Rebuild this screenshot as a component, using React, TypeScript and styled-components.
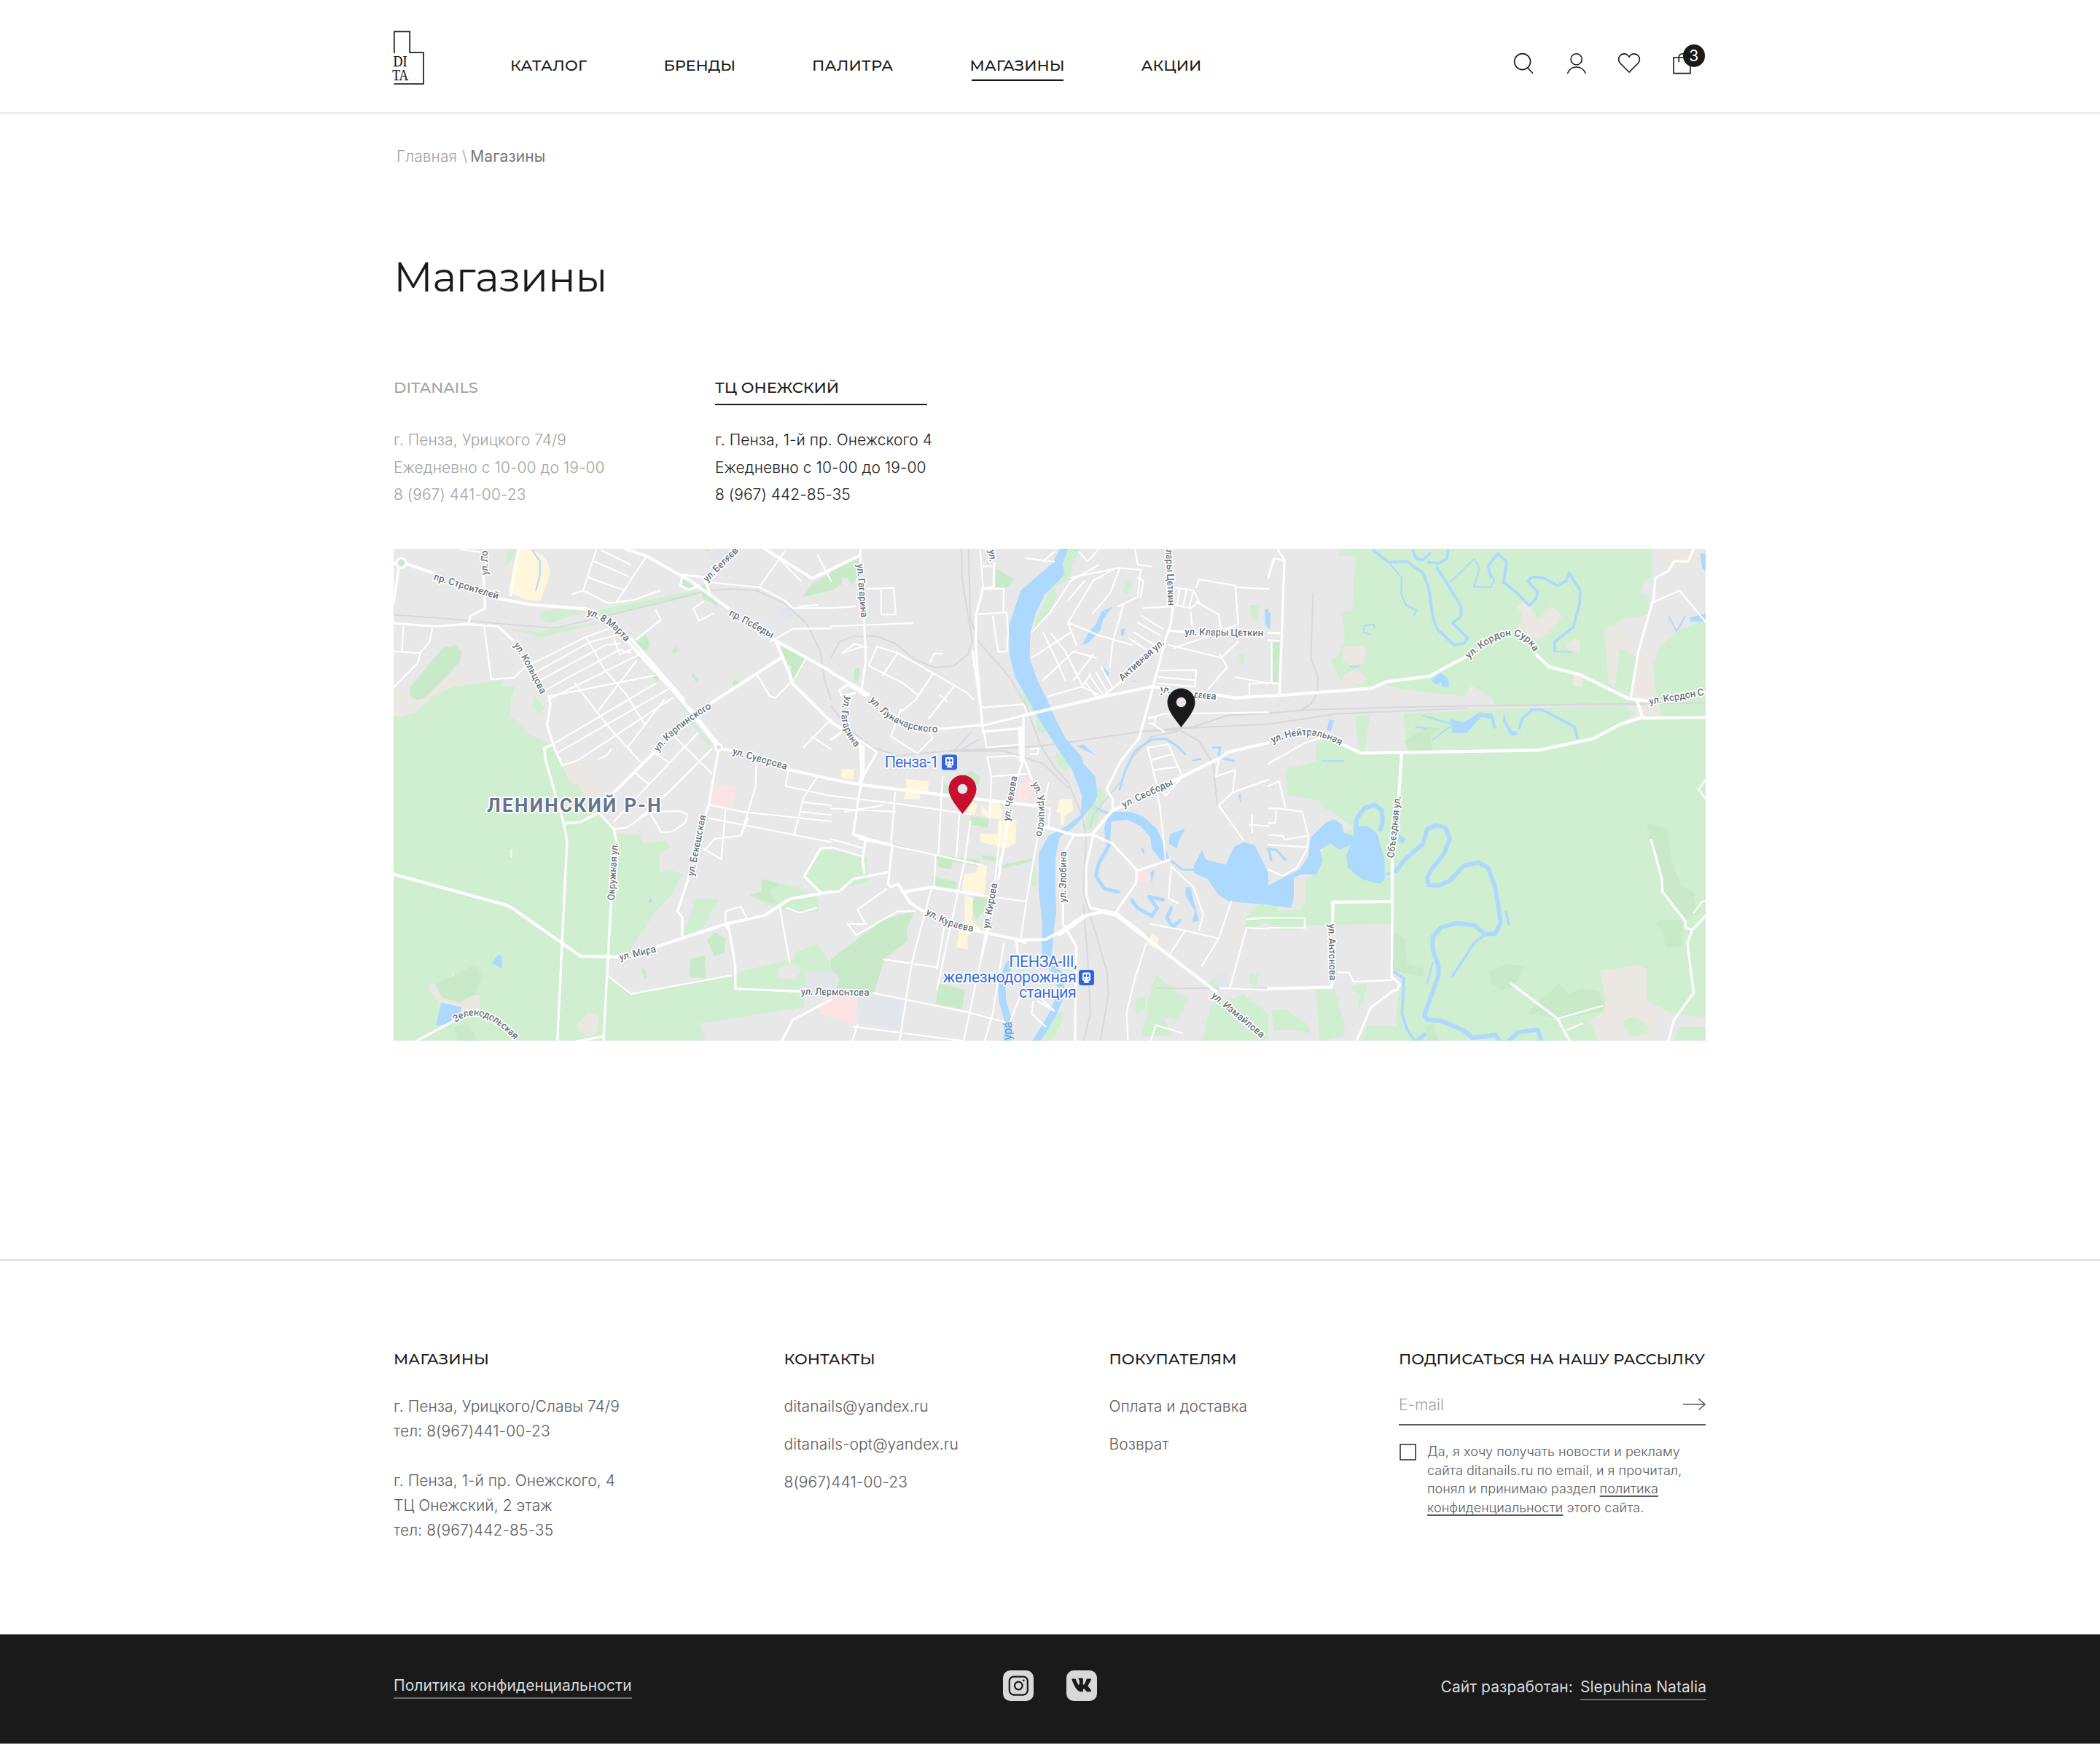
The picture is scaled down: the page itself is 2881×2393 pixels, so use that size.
import React, { useLayoutEffect, useRef, useState } from 'react';
import styled, { createGlobalStyle } from 'styled-components';

const ink = '#1a1a1a';
const muted = '#5c5c5c';
const faint = '#a3a3a3';
const pale = '#d9d9d9';
const display = `Montserrat, Inter, "Open Sans", sans-serif`;
const body = `Inter, "Open Sans", sans-serif`;

const Global = createGlobalStyle`
  *, *::before, *::after { box-sizing: border-box; }
  body { margin: 0; background: #fff; color: ${ink}; font-family: ${body}; font-weight: 300; font-size: 21px; letter-spacing: 0.06px; }
  a { color: inherit; text-decoration: none; }
  p, h1, h2, ul { margin: 0; padding: 0; font-weight: inherit; }
  ul { list-style: none; }
`;

/* ---------- text set to an exact measure ---------- */

const Measured = styled.span`
  display: inline-block;
  white-space: nowrap;
  letter-spacing: 0;
`;

function Fit({ w, children }: { w: number; children: string }) {
  const ref = useRef<HTMLSpanElement>(null);
  const [spacing, setSpacing] = useState(0);
  useLayoutEffect(() => {
    if (!ref.current) return;
    const natural = ref.current.getBoundingClientRect().width;
    setSpacing((w - natural) / children.length);
  }, [w, children]);
  return (
    <Measured ref={ref} style={{ letterSpacing: `${spacing}px` }}>
      {children}
    </Measured>
  );
}

/* ---------- page ---------- */

const Page = styled.div`
  width: 2881px;
  height: 2393px;
  display: flex;
  flex-direction: column;
  overflow: hidden;
`;

const Container = styled.div`
  width: 1800px;
  margin: 0 auto 0 540px;
`;

const Header = styled.header`
  flex: none;
  height: 156px;
  border-bottom: 2px solid #e8e8e8;
`;

const HeaderRow = styled(Container)`
  display: flex;
  align-items: flex-start;
`;

const LogoSvg = styled.svg`
  flex: none;
  width: 46px;
  height: 80px;
  margin: 40px 0 0 -2px;
`;

const Nav = styled.nav`
  display: flex;
  gap: 105px;
  margin: 78px 0 0 116px;
  font-family: ${display};
  font-weight: 500;
  font-size: 21px;
  line-height: 24px;
`;

const NavLink = styled.a<{ $active?: boolean }>`
  height: 33px;
  border-bottom: 2px solid transparent;
  ${(p) =>
    p.$active &&
    `background: linear-gradient(${ink}, ${ink}) 2px 31px / 126px 2px no-repeat border-box;`}
`;

const Tools = styled.div`
  display: flex;
  gap: 42.5px;
  margin: 72px 17.5px 0 auto;
`;

const Tool = styled.button`
  position: relative;
  width: 30px;
  height: 30px;
  padding: 0;
  border: 0;
  background: none;
  svg {
    display: block;
    overflow: visible;
  }
`;

const Badge = styled.span`
  position: absolute;
  left: 16px;
  top: -11px;
  width: 30.5px;
  height: 30.5px;
  border-radius: 50%;
  background: ${ink};
  color: #fff;
  font: 400 21px/31px ${body};
  text-align: center;
`;

const Crumbs = styled.div`
  margin: 46px 0 0 4px;
  height: 26px;
  display: flex;
  gap: 7px;
  line-height: 26px;
  color: ${faint};
`;

const Current = styled.span`
  color: #777;
  font-weight: 400;
  margin-left: -3px;
`;

const Title = styled.h1`
  margin-top: 112px;
  font: 400 56px/80px ${display};
`;

const Stores = styled.div`
  display: flex;
  gap: 148px;
  margin-top: 99px;
  height: 234px;
`;

const Store = styled.section<{ $active?: boolean }>`
  width: ${(p) => (p.$active ? 300 : 293)}px;
  color: ${(p) => (p.$active ? ink : faint)};
  line-height: 37.5px;
  white-space: nowrap;
`;

const StoreName = styled.h2<{ $active?: boolean }>`
  height: 37px;
  width: 291px;
  margin-bottom: 29px;
  font: 500 21px/26px ${display};
  border-bottom: 2px solid ${(p) => (p.$active ? ink : 'transparent')};
`;

const MapFrame = styled.div`
  height: 675px;
  background: #e8e8e8;
  overflow: hidden;
  svg {
    display: block;
  }
`;

const Footer = styled.footer`
  flex: none;
  margin-top: auto;
`;

const FooterTop = styled.div`
  height: 514px;
  border-top: 2px solid #dcdcdc;
`;

const FooterCols = styled(Container)`
  display: grid;
  grid-template-columns: 535.5px 446px 397.5px 421px;
  padding-top: 122px;
  color: ${muted};
`;

const FooterHead = styled.h2`
  font: 500 21px/26px ${display};
  color: ${ink};
  margin-bottom: 35px;
  white-space: nowrap;
`;

const Address = styled.p`
  line-height: 34.2px;
  margin: 0 0 33.6px;
`;

const Links = styled.ul`
  line-height: 34px;
  li + li {
    margin-top: 18.2px;
  }
`;

const MailRow = styled.div`
  display: flex;
  justify-content: space-between;
  align-items: center;
  height: 47px;
  margin-top: -4px;
  padding-bottom: 9px;
  border-bottom: 2px solid ${muted};
  color: ${faint};
`;

const Consent = styled.label`
  display: flex;
  gap: 15px;
  margin-top: 23px;
  font-size: 18px;
  line-height: 25.6px;
`;

const Box = styled.span`
  flex: none;
  width: 23px;
  height: 23px;
  margin: 2px 0 0 1px;
  border: 2px solid ${muted};
`;

const Inline = styled.a`
  text-decoration: underline;
  text-decoration-thickness: 1.5px;
  text-underline-offset: 3px;
  text-decoration-skip-ink: none;
`;

const Bar = styled.div`
  height: 151px;
  background: ${ink};
  border: solid #8c8c8c;
  border-width: 1px 0;
  color: ${pale};
  font-weight: 400;
`;

const BarRow = styled(Container)`
  display: grid;
  grid-template-columns: 1fr auto 1fr;
  align-items: start;
  padding-top: 49px;
`;

const BarLink = styled.a<{ $top: number }>`
  justify-self: start;
  display: inline-block;
  margin-top: ${(p) => p.$top}px;
  padding-bottom: 2px;
  line-height: 28px;
  border-bottom: 2px solid #6f6f6f;
`;

const Social = styled.div`
  display: flex;
  gap: 45px;
`;

const Credit = styled.div`
  display: flex;
  justify-content: flex-end;
  gap: 10px;
  margin-right: -1px;
  line-height: 28px;
  > span {
    margin-top: 9px;
  }
`;

/* ---------- icons ---------- */

const line = { fill: 'none', stroke: ink, strokeWidth: 1.6 };

const Logo = () => (
  <LogoSvg viewBox="0 0 46 80">
    <path d="M2.8 33V3.3H24.2V32.2H43V75.2H2.5" fill="none" stroke={ink} strokeWidth="1.7" />
    <g fontFamily='"Liberation Serif", serif' fontSize="21.5" fill={ink} stroke={ink} strokeWidth="0.25" letterSpacing="0">
      <text x="1.600" y="51" textLength="19" lengthAdjust="spacingAndGlyphs">DI</text>
      <text x="0.300" y="70" textLength="22" lengthAdjust="spacingAndGlyphs">TA</text>
    </g>
  </LogoSvg>
);

const SearchIcon = () => (
  <svg width="30" height="30" {...line}>
    <circle cx="13.6" cy="12.6" r="11" />
    <path d="M21 21.2L28 28.8" />
  </svg>
);

const UserIcon = () => (
  <svg width="30" height="30" {...line}>
    <circle cx="14.7" cy="9.4" r="7.6" />
    <path d="M2.5 29C4.5 23.6 9.2 20 14.8 20S25.200 23.600 27.300 29" />
  </svg>
);

const HeartIcon = () => (
  <svg width="30" height="30" {...line}>
    <path d="M15 27L2.700 14.700C0 12 0 7.200 2.400 4.500C5.300 1.200 10.600 1 13.400 4L15 6L16.600 4C19.400 1 24.700 1.200 27.600 4.500C30 7.200 30 12 27.300 14.700Z" />
  </svg>
);

const BagIcon = () => (
  <svg width="30" height="30" {...line}>
    <path d="M3 6.800H26V28.600H3Z" />
    <path d="M10.200 13V7C10.200 3.500 12 1.800 15.500 1.800H18" />
  </svg>
);

const Instagram = () => (
  <svg width="42" height="42">
    <rect width="42" height="42" rx="10" fill={pale} />
    <rect x="8.800" y="8.600" width="25" height="25" rx="6" fill="none" stroke={ink} strokeWidth="2.200" />
    <circle cx="21.300" cy="21" r="5.300" fill="none" stroke={ink} strokeWidth="2.200" />
    <circle cx="28.300" cy="13.900" r="1.300" fill={ink} />
  </svg>
);

const Vk = () => (
  <svg width="42" height="42">
    <rect width="42" height="42" rx="10" fill={pale} />
    <path
      transform="translate(7 4.300) scale(1.170 1.450)"
      fill={ink}
      d="M12.785 17.240s.41-.045.620-.270c.193-.207.187-.596.187-.596s-.027-1.820.818-2.088c.833-.264 1.903 1.760 3.037 2.538.858.590 1.510.460 1.510.460l3.033-.042s1.587-.098.834-1.345c-.062-.102-.439-.923-2.257-2.610-1.903-1.766-1.648-1.480.644-4.535 1.396-1.860 1.954-2.996 1.780-3.482-.166-.464-1.193-.341-1.193-.341l-3.415.021s-.253-.035-.441.077c-.184.110-.302.367-.302.367s-.541 1.440-1.262 2.664c-1.521 2.583-2.130 2.720-2.378 2.560-.578-.374-.434-1.502-.434-2.303 0-2.504.380-3.548-.740-3.818-.371-.090-.645-.149-1.595-.158-1.220-.013-2.252.004-2.836.290-.389.190-.689.614-.506.639.226.030.737.138 1.009.507.350.476.338 1.546.338 1.546s.201 2.946-.470 3.312c-.460.251-1.092-.261-2.448-2.604-.695-1.200-1.220-2.527-1.220-2.527s-.101-.248-.281-.381c-.219-.161-.524-.212-.524-.212l-3.245.021s-.487.014-.666.226c-.159.188-.013.578-.013.578s2.541 5.944 5.418 8.940c2.638 2.747 5.633 2.567 5.633 2.567z"
    />
  </svg>
);

const Arrow = () => (
  <svg width="31" height="18" fill="none" stroke={muted} strokeWidth="1.600">
    <path d="M0 9H30M21.500 1.500L30 9L21.500 16.500" />
  </svg>
);

/* ---------- map ---------- */

type Sheet = { x: number; kx: number };
const W: Sheet = { x: 0, kx: 2.6133 };
const M: Sheet = { x: 600, kx: 2.6133 };
const E: Sheet = { x: 1200, kx: 2.5705 };

const project = (s: Sheet, pts: string) =>
  pts.trim().split(/\s+/).map((p) => {
    const [x, y] = p.split(',').map(Number);
    return [s.x + x / s.kx, y / 2.2725 - 13.2];
  });

const trace = (s: Sheet, pts: string) =>
  'M' + project(s, pts).map(([x, y]) => `${x.toFixed(1)} ${y.toFixed(1)}`).join('L');

const Lines = ({ s, w, c = '#fff', d }: { s: Sheet; w: number; c?: string; d: string[] }) => (
  <path
    d={d.map((p) => trace(s, p)).join('')}
    fill="none"
    stroke={c}
    strokeWidth={w}
    strokeLinejoin="round"
    strokeLinecap="round"
  />
);

const Areas = ({ s, c, d }: { s: Sheet; c: string; d: string[] }) => (
  <path d={d.map((p) => trace(s, p) + 'Z').join('')} fill={c} />
);

const green = '#d0eed0';
const grove = '#c8eac8';
const water = '#aed9ff';
const sand = '#ebe8e4';
const cream = '#fef7dc';
const rose = '#fce4e4';
const slate = '#e2e6ea';
const rail = '#d6d8db';
const land = '#e8e8e8';

const streets: [Sheet, string, string][] = [
  [W, 'пр. Строителей', '142,126 375,188'],
  [W, 'ул. Ло', '336,112 336,33'],
  [W, 'ул. 8 Марта', '692,236 768,268 832,322'],
  [W, 'ул. Кольцова', '430,330 478,400 528,485'],
  [W, 'пр. Победы', '1200,236 1358,310'],
  [W, 'ул. Беляев', '1124,135 1240,36'],
  [W, 'ул. Карпинского', '948,664 1030,592 1142,526'],
  [W, 'ул. Суворова', '1213,670 1410,719'],
  [W, 'ул. Бекешская', '1076,1052 1120,860'],
  [W, 'Окружная ул.', '791,1127 804,945'],
  [W, 'ул. Мира', '812,1314 945,1286'],
  [W, 'Зеленодольская', '222,1508 320,1490 438,1566'],
  [W, 'ул. Лермонтова', '1460,1420 1708,1424'],
  [M, 'ул. Гагарина', '93,78 108,247'],
  [M, 'ул. Гагарина', '55,488 40,570 90,652'],
  [M, 'ул. Луначарского', '137,502 245,578 385,602'],
  [M, 'ул.', '565,34 570,74'],
  [M, 'лары Цеткин', '1201,32 1209,210'],
  [M, 'ул. Клары Цеткин', '1268,299 1553,303'],
  [M, 'Активная ул.', '1045,444 1125,380 1198,326'],
  [M, 'ул.', '1180,478 1217,481'],
  [M, 'даева', '1298,494 1383,500'],
  [M, 'ул. Свободы', '1050,838 1230,764'],
  [M, 'ул. Чехова', '640,880 668,738'],
  [M, 'ул. Урицкого', '720,762 746,840 734,926'],
  [M, 'ул. Злобина', '842,1133 844,972'],
  [M, 'ул. Кирова', '567,1215 597,1072'],
  [M, 'ул. Кураева', '338,1168 420,1204 510,1224'],
  [M, 'ул. Измайлова', '1362,1426 1545,1558'],
  [E, 'ул. Кордон Сурка', '707,374 850,302 942,360'],
  [E, 'ул. Кордон С', '1345,516 1540,486'],
  [E, 'ул. Нейтральная', '15,637 140,612 256,645'],
  [E, 'Объездная ул.', '443,995 467,800'],
  [E, 'ул. Антонова', '212,1200 216,1378'],
];

function Street({ id, s, name, at }: { id: string; s: Sheet; name: string; at: string }) {
  const p = project(s, at);
  const [a, m] = p;
  const z = p[p.length - 1];
  let d = `M${a}L${z}`;
  let len = Math.hypot(z[0] - a[0], z[1] - a[1]);
  if (p.length === 3) {
    d = `M${a}Q${2 * m[0] - (a[0] + z[0]) / 2} ${2 * m[1] - (a[1] + z[1]) / 2} ${z}`;
    const legs = Math.hypot(m[0] - a[0], m[1] - a[1]) + Math.hypot(z[0] - m[0], z[1] - m[1]);
    len = legs * 1.01;
  }
  return (
    <>
      <path id={id} d={d} fill="none" stroke="none" />
      <text>
        <textPath href={`#${id}`} textLength={len - 1}>{name}</textPath>
      </text>
    </>
  );
}

const Place = ({ s, at, size, children }: { s: Sheet; at: string; size: number; children: string }) => {
  const [a, z] = project(s, at);
  return (
    <text x={a[0]} y={a[1]} fontSize={size} textLength={z[0] - a[0]}>{children}</text>
  );
};

const Station = ({ x, y }: { x: number; y: number }) => (
  <g transform={`translate(${x} ${y})`}>
    <rect width="21" height="21" rx="3.500" fill="#2f66e0" />
    <rect x="5" y="3.500" width="11" height="11.500" rx="2" fill="#fff" />
    <path d="M6.500 17.800L8 15H13L14.500 17.800Z" fill="#fff" />
    <path d="M6.800 6H9.900V9.500H6.800ZM11.100 6H14.200V9.500H11.100ZM7 11.500H8.800V13H7ZM12.200 11.500H14V13H12.200Z" fill="#2f66e0" />
  </g>
);

const Pin = ({ x, y, color }: { x: number; y: number; color: string }) => (
  <g transform={`translate(${x} ${y})`}>
    <path d="M0 0C-5.500 -8 -19 -22 -19 -34.500A19 19 0 0 1 19 -34.500C19 -22 5.500 -8 0 0Z" fill={color} />
    <circle cx="0" cy="-34.500" r="6.800" fill={land} />
  </g>
);

const CityMap = () => (
  <svg width="1800" height="675" viewBox="0 0 1800 675" letterSpacing="0">
    <rect width="1800" height="675" fill={land} />

    {/* sandy ground */}
    <Areas s={W} c={sand} d={[
      '0,490 60,470 200,440 250,385 265,450 80,545 0,560',
      '605,705 690,700 725,740 722,790 660,850 600,760',
      '460,570 550,585 548,610 490,612',
      '120,1385 220,1330 310,1320 320,1500 150,1520',
      '885,925 980,940 960,1060 890,1000',
    ]} />
    <Areas s={M} c={sand} d={['1460,1150 1490,1150 1480,1250 1430,1262']} />

    {/* parkland */}
    <Areas s={W} c={green} d={[
      '0,550 25,555 80,540 140,490 215,460 388,440 390,457 435,458 420,505 418,552 470,575 495,608 550,603 570,640 605,708 640,768 660,763 690,810 735,850 790,905 800,917 885,925 890,950 975,940 992,962 952,982 954,1040 980,1028 1036,1045 990,1115 935,1165 850,1280 845,1303 770,1303 768,1362 852,1418 1235,1358 1330,1330 1460,1380 1470,1460 1100,1510 1120,1568 0,1568',
      '530,225 600,218 690,225 560,262 528,250',
      '405,278 520,290 600,276 740,262 528,306',
      '730,222 1080,160 1090,175 740,240',
      '500,485 545,525 520,545 500,525',
      '1085,1120 1167,1125 1105,1215 1035,1237',
      '1530,965 1700,990 1700,1070 1530,1100 1472,1052',
      '1320,1060 1460,1090 1523,1120 1523,1160 1450,1168 1340,1140 1275,1110 1320,1100',
      '1235,1350 1430,1310 1450,1285 1520,1262 1560,1315 1700,1320 1700,1360 1480,1350 1470,1458 1240,1400',
      '410,30 437,30 430,60 395,85',
      '850,330 905,298 918,320 915,345 872,350 895,375 880,375',
      '1100,30 1138,30 1125,42',
      '1000,490 1065,545 1060,550 990,480',
      '1075,568 1140,640 1130,645 1065,575',
    ]} />
    <Areas s={M} c={green} d={[
      '0,980 40,985 75,1025 70,1060 30,1095 0,1100',
      '848,30 895,30 862,80 860,120 800,150 810,180 780,230 725,300 735,250 790,150 830,120 825,75',
      '684,478 700,480 775,570 770,605 740,600 735,545 700,520',
      '795,680 830,663 855,712 838,725',
      '905,905 955,770 985,800 950,895 915,910',
      '725,1015 738,1030 735,1080 718,1080',
      '1045,160 1065,128 1085,132 1060,175',
      '1500,205 1535,205 1530,250 1508,252',
      '1525,1110 1600,1110 1600,1180 1490,1220 1485,1180 1530,1140',
      '1165,1360 1280,1435 1245,1500 1190,1490 1225,1550 1110,1550 1130,1500 1135,1440',
      '1360,1455 1480,1420 1568,1480 1568,1568 1330,1568',
      '1350,1385 1395,1350 1405,1380 1380,1400',
      '790,1480 830,1470 830,1500 790,1568 760,1568',
      '1465,355 1485,360 1480,390 1465,385',
      '1500,1350 1530,1355 1525,1390 1500,1385',
      '1090,1435 1130,1425 1125,1470 1095,1480',
    ]} />
    <Areas s={E} c={green} d={[
      '250,30 1350,30 1350,120 1325,130 1315,165 1350,180 1345,235 1245,250 1185,285 1200,450 1270,490 1290,510 800,520 790,495 715,455 690,490 580,480 460,465 410,450 350,465 260,450 220,375 245,365 270,320 262,225 295,225 308,55 250,52',
      '1220,330 1300,370 1280,480 1225,465',
      '1355,405 1380,335 1440,290 1542,245 1542,560 1390,555 1370,500',
      '478,545 800,530 1250,520 1298,540 1240,575 1142,620 1100,622 955,658 490,665',
      '310,552 358,550 340,662 325,665 310,600',
      '325,670 490,668 955,662 1240,583 1320,562 1542,560 1542,1568 470,1568 450,1485 470,1350 435,1340 438,1200 0,1204 0,1160 120,1155 115,1070 155,1050 195,960 300,900 245,862 190,835 180,815 130,808 70,800 62,730 70,715 165,695 170,640 220,615',
      '170,1405 235,1402 250,1460 270,1510 265,1550 180,1568',
      '10,1470 60,1465 140,1515 150,1540 90,1530 20,1530',
      '290,1395 350,1385 330,1455 315,1460 325,1425',
      '350,1515 470,1520 470,1568 325,1568',
    ]} />

    {/* bare ground and groves inside the parkland */}
    <Areas s={W} c={land} d={['435,458 550,490 565,640 490,610 420,550', '1105,1512 1435,1462 1480,1470 1480,1568 1120,1568', '1380,1335 1440,1322 1460,1345 1440,1375 1378,1368']} />
    <Areas s={W} c={sand} d={[
      '120,1390 145,1385 170,1430 310,1420 310,1480 245,1480 160,1445',
      '652,1518 700,1475 740,1490 725,1545 690,1550',
      '200,1370 215,1348 220,1362',
    ]} />
    <Areas s={W} c={green} d={['500,485 545,525 520,545 500,525']} />
    <Areas s={W} c={grove} d={[
      '150,1385 220,1360 290,1325 322,1360 290,1420 235,1445 175,1430',
      '218,1520 265,1510 305,1568 230,1568',
      '1065,1310 1115,1298 1120,1370 1060,1365',
      '888,1340 900,1336 910,1368 898,1370',
      '1125,1250 1150,1225 1190,1245 1185,1290 1150,1300',
      '1385,318 1460,360 1480,380 1440,445 1428,440 1425,395 1400,395',
      '870,325 905,298 918,330 900,350',
      '997,350 1012,335 1022,345 1005,358',
      '1068,425 1075,418 1095,438 1085,446',
      '1215,445 1225,437 1240,447 1218,460',
      '925,425 935,415 955,435 945,445',
      '60,460 175,340 225,330 245,355 235,385 115,495 80,503 58,485',
      '1465,180 1500,140 1568,105 1568,160',
      '15,70 30,64 42,74 30,84',
      '1030,115 1060,125 1080,150 1050,155 1032,145',
      '1100,150 1120,135 1132,165 1170,215 1110,185',
      '1320,1060 1380,1075 1345,1100 1380,1140 1325,1125 1275,1110 1320,1100',
    ]} />
    <Areas s={M} c={grove} d={[
      '0,100 105,50 100,110 75,145 60,120 40,120 40,140 0,160',
      '590,90 658,125 632,150 590,148',
      '85,405 102,400 105,420 92,448 82,440',
      '470,740 500,722 535,740 530,765 480,765',
      '400,768 430,768 430,795 400,790',
      '500,865 565,872 562,900 500,890',
      '375,985 535,1000 530,1018 380,1000',
      '540,985 595,992 595,1003 540,998',
      '600,1018 722,995 722,1005 605,1028',
      '385,1000 435,1005 432,1030 385,1022',
      '362,1050 452,1070 448,1092 365,1080',
      '512,1115 562,1120 555,1150 520,1190 505,1150',
      '300,1160 270,1220 275,1250 190,1312 155,1415 20,1400 30,1370 0,1340 0,1310 75,1260 190,1185',
      '385,1385 480,1405 470,1465 375,1450',
      '218,950 335,975 335,980 218,957',
      '514,385 522,385 530,440 520,440',
    ]} />
    <Areas s={E} c={grove} d={[
      '10,320 40,322 35,447 12,445',
      '480,630 560,585 605,590 572,615 575,660 500,660',
      '1335,885 1410,905 1420,1000 1455,1080 1505,1105 1500,1125 1525,1160 1470,1185 1390,1110 1380,1040 1350,960',
      '1365,1200 1390,1187 1460,1190 1462,1270 1400,1272 1395,1225',
      '780,1350 840,1325 905,1330 885,1365 860,1400 820,1405 785,1385',
      '910,1480 1025,1385 1060,1420 1100,1400 1165,1412 1195,1470 1020,1495 930,1480',
      '442,1230 480,1245 490,1325 550,1340 545,1365 440,1345',
      '555,1520 580,1510 600,1568 560,1568',
    ]} />
    <Areas s={E} c={sand} d={[
      '875,215 900,195 925,210 950,250 1000,207 1037,240 985,295 945,315 880,275 895,235',
      '1045,335 1080,310 1100,320 1097,358',
      '1075,425 1115,422 1105,460 1073,458',
      '1170,1345 1300,1328 1335,1340 1335,1440 1440,1485 1420,1568 1165,1568 1135,1500 1180,1470 1190,1440',
      '1360,30 1542,30 1542,95 1470,75 1410,100',
      '1190,285 1250,270 1295,340 1240,330 1222,465 1198,450',
      '1310,350 1350,350 1370,490 1390,555 1330,550 1290,495',
      '265,335 342,332 343,385 310,395 265,385',
      '268,420 315,405 350,435 310,462 250,452',
      '95,1060 130,1060 130,1140 90,1150',
    ]} />
    <Areas s={E} c={land} d={[
      '360,552 478,548 478,662 342,662',
      '1365,105 1450,70 1542,110 1542,245 1440,290 1350,300 1340,200',
      '1340,1465 1435,1480 1542,1490 1542,1568 1400,1568',
    ]} />
    <Areas s={E} c={green} d={['1250,1505 1290,1485 1342,1520 1325,1545 1270,1550', '1450,1520 1542,1520 1542,1568 1430,1568', '45,1188 125,1190 110,1220 45,1220']} />

    {/* built-up blocks */}
    <Areas s={W} c={cream} d={['450,30 490,30 520,45 545,60 562,98 545,150 525,193 480,190 412,165 430,80']} />
    <Areas s={M} c={cream} d={[
      '38,718 82,718 80,750 38,745',
      '270,748 350,755 348,785 320,790 318,810 260,812 268,785',
      '495,812 525,825 515,860 490,850',
      '540,830 560,850 570,818 600,818 615,845 612,875 570,870 540,860',
      '600,878 665,875 662,950 620,965 590,955 535,945 535,918 595,920',
      '820,812 865,808 868,848 840,860 835,890 822,890 825,855 808,850',
      '530,1010 560,1020 550,1110 490,1110 470,1090 478,1045 520,1040',
      '480,1110 510,1120 505,1190 540,1215 490,1235 490,1280 450,1272 460,1220 480,1210',
      '1150,1228 1175,1245 1165,1280 1135,1262',
    ]} />
    <Areas s={W} c={rose} d={['1142,765 1228,770 1215,840 1130,828', '1535,1435 1568,1430 1568,1490 1525,1480']} />
    <Areas s={M} c={rose} d={['0,1425 95,1430 88,1515 0,1490', '675,760 700,750 738,765 720,790 705,820 668,812', '1098,1035 1125,1032 1142,1055 1130,1075 1100,1062']} />
    <Areas s={M} c={slate} d={['98,1425 265,1430 240,1525 98,1508', '0,1345 18,1360 15,1400 0,1400', '1370,1360 1425,1345 1430,1400 1395,1405']} />
    <Areas s={W} c={slate} d={['1130,50 1165,30 1215,30 1150,75', '1365,205 1420,215 1430,245 1380,240', '1482,1352 1568,1350 1568,1420 1478,1410']} />

    {/* railways */}
    <Lines s={W} w={2} c={rail} d={['0,236 200,248 400,265 580,277 760,240 950,200 1110,163 1210,155 1300,160 1400,200 1480,262 1530,350 1545,440 1568,500']} />
    <Lines s={M} w={2} c={rail} d={[
      '0,370 30,320 80,303 160,302 230,325 300,375 370,400 440,395 490,360 508,320 490,230 470,120 468,30',
      '493,30 500,250 530,320 640,430 700,520 750,640 800,710 850,760 900,860 915,930 905,1100 960,1260 990,1350 995,1420 965,1568',
      '0,520 60,590 150,650 240,675 450,658 560,655 750,645 880,630 1110,600 1300,585 1420,550 1568,543',
      '430,662 620,660 760,700 850,775',
      '1110,600 1250,595 1320,630 1370,700 1385,830',
      '1250,590 1568,577',
      '930,900 940,860 1040,755 1080,680 1150,615 1240,600',
      '905,1140 920,1300 930,1480 905,1568',
      '500,605 440,660', '530,625 460,660',
      '1170,1400 1568,1400',
    ]} />
    <Lines s={E} w={2} c={rail} d={[
      '0,543 130,532 420,525 700,520 1542,510',
      '0,577 240,545 700,527',
      '158,170 150,370 175,430 172,480 150,515 110,535',
      '700,520 1330,515',
    ]} />

    {/* rivers and lakes */}
    <Areas s={M} c={water} d={[
      '822,30 850,30 830,80 838,110 800,145 765,175 735,230 715,290 712,370 740,440 780,510 805,560 840,620 900,680 905,700 948,740 955,800 940,830 880,890 820,930 805,990 805,1090 808,1165 800,1210 790,1310 755,1310 757,1190 745,1100 745,980 780,925 835,900 895,860 900,800 865,720 810,650 745,560 700,490 660,430 640,360 638,270 680,160 790,78',
      '1010,210 975,250 965,285 920,325 900,330 925,290 950,265 970,225',
      '940,830 990,850 1075,850 1120,865 1170,905 1195,955 1215,1000 1180,1000 1150,965 1145,930 1110,895 1060,875 1005,880 1000,965 985,950 980,900 995,860 965,850',
      '1215,920 1270,903 1248,940 1240,965 1212,950',
      '1300,1020 1330,970 1345,1000 1415,1015 1445,960 1480,945 1520,955 1545,1000 1568,1040 1568,1140 1430,1130 1390,1110 1350,1060 1300,1040',
      '1272,1085 1290,1085 1300,1130 1320,1190 1295,1195 1305,1160 1270,1110',
      '905,640 950,675 880,645',
      '1040,280 1055,278 1050,300 1040,300', '975,398 997,415 995,428 985,425',
      '1075,445 1100,445 1088,440', '1555,220 1568,215 1568,280 1558,265',
      '1460,800 1470,790 1470,825', '1110,960 1125,970 1120,985', '1145,1040 1160,1030 1150,1075',
    ]} />
    <Areas s={E} c={water} d={[
      '0,1080 110,1030 140,990 150,930 200,885 232,873 260,890 265,915 300,925 303,895 350,895 385,920 410,1000 410,1060 395,1075 330,1060 280,1025 275,985 290,955 250,968 220,950 182,968 192,1005 170,1045 120,1045 90,1055 90,1120 80,1150 0,1140',
      '575,440 605,415 635,435 638,462 610,460 612,445 590,455',
      '640,560 690,572 745,540 790,545 805,590 792,590 785,560 750,555 700,605 650,605 645,590',
      '830,540 840,570 860,598 880,600 878,612 855,612 828,570',
      '460,920 485,935 475,950 460,945', '415,1038 450,1040 415,1050',
      '215,562 232,565 220,600 207,595', '1485,245 1542,232 1542,255 1490,258',
      '1522,45 1542,45 1542,100 1530,90', '0,225 8,235 5,280 0,280', '288,395 325,393 318,400 292,400',
    ]} />
    <Areas s={W} c={water} d={['352,1320 375,1296 387,1300 390,1340', '170,1445 242,1458 242,1478 205,1510 152,1518', '913,1128 922,1120 928,1128 920,1134']} />
    <Lines s={W} w={2} c={water} d={['498,35 525,70 525,110 510,160']} />
    <Lines s={M} w={5} c={water} d={['1000,950 960,1010 950,1050 980,1090 1030,1100', '1078,1125 1100,1150 1150,1175 1170,1150 1140,1115 1190,1125', '1220,1150 1205,1180 1225,1210 1250,1190']} />
    <Lines s={M} w={10} c={water} d={['640,1325 612,1380 615,1440 635,1500 632,1568', '775,1320 820,1360 825,1420 790,1490 735,1568']} />
    <Lines s={M} w={3} c={water} d={['1035,780 1055,720 1090,660 1150,625 1200,622 1240,645 1270,670', '1215,1000 1260,1030 1350,1032', '1370,650 1395,650 1390,680 1445,692', '1300,690 1325,685']} />
    <Lines s={E} w={3.800} c={water} d={[
      '370,35 425,72 490,70 545,105 565,150 580,240 595,280 655,330 690,325 703,308 650,262 680,240 680,210 635,145 595,90',
      '510,35 520,60 545,65 570,45', '635,30 630,60 600,75 565,72',
      '785,120 775,85 808,45 840,70 830,135 880,170 920,207 945,185 950,165 915,130 930,118 970,120 1020,145 1050,130 1060,105 1100,160 1098,200 1075,275 1010,320 1010,350',
      '885,590 895,560 930,532 965,532 1080,585 1090,620',
      '445,1350 478,1370 472,1480 490,1530 520,1568',
    ]} />
    <Lines s={E} w={2} c={water} d={[
      '425,72 470,120 468,170 485,205 522,222 512,240',
      '1010,350 1070,353', '580,1320 560,1385',
      '640,135 725,62 745,90 725,148 785,150 797,125 785,110',
      '335,290 340,270 372,265 375,275', '340,292 360,297', '190,692 265,692', '1412,240 1440,288 1470,240', '580,625 640,585',
      '545,550 640,575', '520,585 555,590',
    ]} />
    <Lines s={E} w={6} c={water} d={[
      '450,1035 480,1000 545,950 560,905 590,892 625,900 640,935 620,980 580,1025 560,1055 565,1078 600,1080 640,1065 690,1018 740,1008 775,1025 800,1085 820,1195 800,1230 765,1232 725,1203 660,1198 610,1210 580,1240 580,1280 600,1330 600,1360 550,1485 560,1498 610,1502 690,1532 720,1555 800,1545 820,1568',
      '308,900 312,870 340,838 375,828 400,845 403,880 395,905',
      '845,1568 880,1538 950,1530 965,1568', '520,1568 550,1545',
    ]} />
    <Lines s={E} w={3.500} c={water} d={['10,1000 0,965 30,970 60,1000', '838,1162 848,1200', '765,1232 725,1260 650,1362']} />

    {/* side streets */}
    <Lines s={W} w={2.2} d={[
      '470,400 690,305 770,280', '500,420 705,320 800,300', '525,440 760,330 810,325', '545,470 810,345 850,355', '560,498 880,360',
      '580,635 940,450', '590,665 980,470', '605,705 660,690 1000,495', '555,490 935,425',
      '690,305 755,405 835,485 900,578', '650,450 780,595 885,695', '840,648 970,500', '730,540 870,380',
      '735,685 765,675 780,655', '790,310 810,360 860,340', '865,728 912,762', '925,660 985,695', '1000,610 1140,730', '1140,655 985,790 880,870',
      '790,880 1090,605', '795,903 835,900 920,850 1030,848 1053,860 1045,885 1000,912 960,915 920,855',
      '727,30 680,160 770,200 860,190 955,160', '905,55 800,195', '680,160 640,172', '745,35 850,80', '720,70 840,115', '700,120 830,160',
      '1130,870 1568,945', '1130,828 1250,850 1568,880', '1300,700 1298,770 1245,925 1150,935 1120,965', '1190,845 1175,998 1110,965',
      '1415,720 1405,770 1568,800', '1520,740 1470,805 1437,918', '1470,820 1568,830', '1460,850 1568,860',
      '1405,35 1310,150', '1300,420 1350,490 1370,495 1430,440', '1480,370 1435,440', '940,222 958,252 870,312',
      '1135,135 1310,150 1400,190 1430,215 1568,215', '1385,1150 1420,1320', '1190,1200 1190,1160 1245,1145 1265,1180',
      '1110,195 1075,215 1095,255 1145,232', '310,40 240,32', '0,350 95,355 88,385 0,462', '35,270 30,350', '138,280 130,320 95,355',
      '325,275 350,437 432,432 470,400', '1520,50 1568,130', '1410,1150 1455,1165 1515,1150', '1350,320 1430,280 1568,278',
      '1470,650 1568,560', '768,1362 852,1418 1210,1360', '422,970 422,990', '1270,870 1245,925', '1455,210 1520,205',
      '1500,615 1568,655', '1380,60 1460,130',
    ]} />
    <Lines s={M} w={2.2} d={[
      '0,215 90,210', '130,155 225,152 232,235 180,235 180,155', '0,272 292,262', '520,235 630,228 635,290 630,350 600,352 580,240',
      '540,155 620,155 618,228', '545,150 540,85', '535,30 540,85 580,85',
      '115,335 40,355 85,325 130,340', '165,335 135,395 260,450 310,485', '165,335 240,355 490,480 510,500', '240,355 185,425', '365,420 305,500 250,540', '440,460 350,560',
      '250,530 215,615 310,668 365,620 330,580', '355,385 370,357 400,357', '390,485 415,505',
      '540,525 690,515 705,545', '548,600 558,650 680,640 685,590', '560,680 660,675 690,690', '560,680 575,740 700,732', '575,740 570,870', '715,655 745,652 740,670 715,670',
      '0,800 240,825 500,858', '0,840 230,850', '400,740 385,985', '230,790 215,955', '460,860 450,990', '500,880 480,1000 380,1405', '0,935 120,965', '0,960 115,990',
      '185,830 50,850', '115,1000 120,1040', '100,935 215,955 375,985 535,1015', '375,985 370,1080', '360,1090 290,1320 245,1568', '385,1090 530,1110 700,1130 745,910 780,760', '610,880 590,1050 540,1300 475,1568',
      '200,1090 95,1155 125,1200 60,1200 90,1235 240,1160 300,1160', '190,1310 380,1335', '150,1415 490,1475 640,1510', '410,1190 380,1340', '620,1260 580,1480 550,1568', '660,1250 700,1260',
      '80,1520 480,1565', '95,1515 75,1568', '620,965 600,1020', '700,1130 680,1250', '725,1440 720,1480 770,1520', '690,1400 640,1510', '740,890 780,895 785,840 740,830', '740,1440 800,1470 750,1430',
      // the hillside streets on the east bank
      '720,290 785,230 860,130 960,80', '790,295 840,350 900,455', '760,290 820,400 840,440', '860,120 1030,90 1110,95', '1020,90 940,130 850,260 880,330', '850,260 960,300 1080,330', '1050,200 1010,320 1000,400', '1110,95 1100,180 1030,210', '1035,90 1000,170 940,230', '780,490 900,460 970,490', '720,370 860,290', '760,440 870,350 950,370', '870,440 940,360', '900,460 930,420', '890,40 920,70 960,30', '910,130 850,190', '700,60 800,70', '760,70 800,40',
      '930,430 975,485', '950,415 990,475', '970,400 1010,465', '910,445 950,490',
      '1090,30 1100,80 1150,85', '1100,120 1120,130 1110,180', '1120,215 1220,210', '1115,240 1190,280', '1100,260 1180,300', '1085,290 1160,330', '1070,310 1140,350',
      '1170,410 1310,408 1305,460', '1175,430 1305,440', '1170,450 1300,460', '1225,150 1300,160 1320,195 1290,215 1230,205', '1250,155 1240,205', '1275,158 1262,210', '1300,160 1285,210',
      '1310,150 1320,125 1450,145 1460,265 1360,300 1230,340', '1450,150 1568,155', '1310,195 1390,235 1400,290', '1290,230 1295,270', '1395,360 1420,400 1350,470', '1210,330 1400,370 1460,320', '1450,430 1568,450', '1500,450 1500,490', '1500,450 1568,448', '1140,560 1190,545 1568,540',
      '1135,650 1210,640 1260,740 1200,800 1170,770 1135,650', '1145,690 1225,670', '1155,720 1245,710', '1200,1000 1180,840 1170,790', '1390,690 1380,740 1450,720 1440,790 1390,830', '1390,830 1480,940', '1440,790 1568,750', '1500,890 1568,895', '1510,860 1510,915',
      '1220,1020 1210,1120 1245,1135', '1220,1020 1300,1085 1335,1170 1320,1220', '1145,1200 1270,1220 1390,1245 1435,1130', '1270,1220 1210,1300', '1390,1245 1330,1330', '1130,1262 1090,1370 1060,1475 1065,1568', '1490,1185 1568,1180', '1490,1212 1568,1215', '1490,1212 1430,1400',
      '1395,1400 1568,1405', '1145,1568 1165,1515 1260,1540', '1195,600 1150,575', '1140,555 1165,553 1160,575 1140,575',
    ]} />
    <Lines s={E} w={2.2} d={[
      '0,448 40,450', '12,320 12,445', '0,315 45,318', '0,700 130,635 185,620', '0,770 38,755 60,835', '0,840 40,840 120,850 142,930 135,970 100,1025 50,1050 0,1030',
      '28,850 25,885 0,885', '0,922 52,925 55,937 140,925', '0,953 135,960', '0,1180 128,1180 128,1212 0,1212', '245,1350 285,1352 300,1380 435,1375',
      '1350,200 1450,160 1542,258', '1542,750 1518,780 1542,810', '1500,1165 1530,1130 1542,1128', '1055,1530 1108,1510', '1020,1495 1178,1455', '20,60 50,65',
    ]} />

    {/* connecting streets */}
    <Lines s={W} w={3.2} d={[
      '0,262 150,272 260,265 375,272 430,318', '322,110 328,215 275,240 268,265', '20,80 0,200', '448,30 420,175', '555,490 562,515 550,580 580,660 605,705',
      '570,640 540,652 545,690 610,885 622,940 605,1240 587,1568', '610,887 670,882 735,852', '735,852 790,905 798,940', '780,1125 765,1362 752,1568',
      '1165,655 1130,828 1118,860', '1060,1050 1018,1160 1035,1180 1035,1235', '1200,1205 1225,1330 1225,1402 1460,1410', '645,1568 752,1550',
      '1035,115 1028,145 1060,158 1095,145', '1040,112 1110,118 1132,165', '75,1568 220,1500', '1185,1200 1205,1220', '1568,1435 1430,1500 1390,1568', '1472,1052 1530,965 1568,962', '1472,1052 1530,1100',
    ]} />
    <Lines s={M} w={3.2} d={[
      '105,30 105,70', '118,245 125,380 110,470', '585,75 583,148 545,155 520,235 520,350 545,600 680,590', '508,350 540,545', '85,480 40,490 30,470 60,455 130,485', '110,630 165,665 115,740 100,800 80,920', '125,935 113,1000 120,1040',
      '220,955 205,1075', '385,592 560,578 690,550', '690,555 690,680 720,750', '675,590 685,700 670,740', '635,880 600,1060', '565,1215 540,1300', '1225,210 1220,260 1200,310 1155,460 1105,620 1040,690 988,780 1010,810 1010,840', '1210,285 1268,290', '975,490 1045,440',
      '870,925 840,970', '832,1130 832,1200 880,1270 875,1568', '665,1250 670,1300', '940,925 915,1020 915,1110 930,1150 1020,1165', '935,920 1010,950 1095,1030 1095,1070 1020,1165', '1095,1035 1215,1000', '0,1100 30,1098 80,1060 205,1038', '205,1075 215,1085 240,1075', '0,625 60,590',
    ]} />
    <Lines s={E} w={3.2} d={[
      '20,60 0,120', '35,35 57,65 40,480', '0,292 45,293', '1500,30 1480,70 1432,68 1410,100 1365,120 1360,180 1305,350 1278,495', '438,1130 435,1365 465,1388 455,1405 440,1408 360,1462 310,1568',
      '1350,938 1388,1060 1390,1100 1470,1190 1472,1212 1495,1218 1542,1175', '1495,1218 1478,1260 1500,1415 1430,1500 1410,1568', '855,1385 1020,1495 1065,1568',
    ]} />

    {/* main roads */}
    <Lines s={W} w={4.2} d={[
      '-10,75 40,75 140,105', '375,185 500,205 690,217 740,250', '840,320 940,415 1020,490 1100,570 1165,650', '850,310 1040,500', '790,790 940,660', '1140,510 1385,372', '1185,655 1215,660', '1415,718 1568,748',
      '0,1045 400,1140 425,1150 670,1300 810,1303', '945,1270 1190,1200 1330,1173 1420,1122 1568,1100', '830,30 905,52 1060,128 1200,215', '1330,30 1500,122 1568,95', '1360,312 1568,412', '1370,318 1420,420 1430,450 1568,570', '220,1500 300,1475',
    ]} />
    <Lines s={M} w={4.2} d={[
      '0,95 105,50', '0,415 135,485', '0,570 105,630 112,740 100,765', '0,748 100,765 500,808 740,832', '80,920 130,935 220,955', '690,550 980,490 1150,460 1210,468', '1380,485 1450,495 1568,488',
      '740,890 870,922 935,922 1010,845 1050,830', '1225,755 1400,680 1420,665 1568,635', '240,1075 285,1135 340,1165', '265,1100 360,1085 540,1110', '515,1220 680,1250 770,1248 830,1220 905,1175 970,1162 1030,1175 1140,1250 1380,1410', '0,1420 1,1420',
    ]} />
    <Lines s={M} w={6.500} d={['112,650 112,740', '85,460 125,485', '820,1230 905,1178', '1020,1168 1120,1235', '679,590 684,690']} />
    <Lines s={W} w={6.500} d={['1060,530 1160,640']} />
    <Lines s={E} w={4.2} d={[
      '0,490 365,465 415,445 570,427 700,365', '945,360 990,398 1100,423 1270,497 1345,505', '1300,505 1320,555 1240,578 1145,622 955,658 325,667 260,640', '1320,558 1542,556', '470,670 460,800', '437,1000 437,1130 228,1132 226,1200', '228,1378 222,1397 0,1402',
    ]} />
    <circle cx="446" cy="272.500" r="4.500" fill={green} stroke="#fff" strokeWidth="3" />
    <circle cx="10.500" cy="19.500" r="6.500" fill={grove} stroke="#fff" strokeWidth="3" />

    {/* names */}
    <g fontFamily="Roboto, sans-serif" fontSize="13.500" fontWeight="500" fill="#6a737b" stroke="#fff" strokeWidth="3.500" strokeLinejoin="round" paintOrder="stroke">
      {streets.map(([s, name, at], i) => (
        <Street key={i} id={`street-${i}`} s={s} name={name} at={at} />
      ))}
    </g>
    <g fontFamily="Roboto, sans-serif" fontWeight="700" fill="#67738b" stroke="#fff" strokeWidth="4" strokeLinejoin="round" paintOrder="stroke">
      <Place s={W} at="335,850 958,850" size={26}>ЛЕНИНСКИЙ Р-Н</Place>
    </g>
    <g fontFamily="Roboto, sans-serif" fontWeight="400" fill="#3d6fdc" stroke="#fff" strokeWidth="3.500" strokeLinejoin="round" paintOrder="stroke">
      <Place s={M} at="192,712 388,712" size={22}>Пенза-1</Place>
      <Place s={M} at="638,1335 882,1335" size={21.5}>ПЕНЗА-III,</Place>
      <Place s={M} at="402,1383 880,1383" size={21.5}>железнодорожная</Place>
      <Place s={M} at="674,1430 880,1430" size={21.5}>станция</Place>
    </g>
    <text transform="translate(848 674) rotate(-90)" fontFamily="Roboto, sans-serif" fontSize="16" fill="#3d7fd6">ура́</text>
    <Station x={752} y={282.500} />
    <Station x={940} y={578} />
    <Pin x={780.500} y={364} color="#c8102e" />
    <Pin x={1080.500} y={245} color={ink} />
  </svg>
);

/* ---------- content ---------- */

const menu: [string, number][] = [
  ['КАТАЛОГ', 105.5],
  ['БРЕНДЫ', 98.5],
  ['ПАЛИТРА', 111.5],
  ['МАГАЗИНЫ', 130],
  ['АКЦИИ', 83],
];

export default function App() {
  return (
    <>
      <Global />
      <Page>
        <Header>
          <HeaderRow>
            <Logo />
            <Nav>
              {menu.map(([name, w]) => (
                <NavLink key={name} href="#" $active={name === 'МАГАЗИНЫ'}>
                  <Fit w={w}>{name}</Fit>
                </NavLink>
              ))}
            </Nav>
            <Tools>
              <Tool><SearchIcon /></Tool>
              <Tool><UserIcon /></Tool>
              <Tool><HeartIcon /></Tool>
              <Tool><BagIcon /><Badge>3</Badge></Tool>
            </Tools>
          </HeaderRow>
        </Header>

        <Container>
          <Crumbs>
            <a href="#">Главная</a>
            <span>\</span>
            <Current>Магазины</Current>
          </Crumbs>
          <Title><Fit w={293}>Магазины</Fit></Title>
          <Stores>
            <Store>
              <StoreName><Fit w={116}>DITANAILS</Fit></StoreName>
              <p>г. Пенза, Урицкого 74/9</p>
              <p>Ежедневно с 10-00 до 19-00</p>
              <p>8 (967) 441-00-23</p>
            </Store>
            <Store $active>
              <StoreName $active><Fit w={170}>ТЦ ОНЕЖСКИЙ</Fit></StoreName>
              <p>г. Пенза, 1-й пр. Онежского 4</p>
              <p>Ежедневно с 10-00 до 19-00</p>
              <p>8 (967) 442-85-35</p>
            </Store>
          </Stores>
          <MapFrame><CityMap /></MapFrame>
        </Container>

        <Footer>
          <FooterTop>
            <FooterCols>
              <section>
                <FooterHead><Fit w={131}>МАГАЗИНЫ</Fit></FooterHead>
                <Address>г. Пенза, Урицкого/Славы 74/9<br />тел: 8(967)441-00-23</Address>
                <Address>г. Пенза, 1-й пр. Онежского, 4<br />ТЦ Онежский, 2 этаж<br />тел: 8(967)442-85-35</Address>
              </section>
              <section>
                <FooterHead><Fit w={125}>КОНТАКТЫ</Fit></FooterHead>
                <Links>
                  <li>ditanails@yandex.ru</li>
                  <li>ditanails-opt@yandex.ru</li>
                  <li>8(967)441-00-23</li>
                </Links>
              </section>
              <section>
                <FooterHead><Fit w={175}>ПОКУПАТЕЛЯМ</Fit></FooterHead>
                <Links>
                  <li>Оплата и доставка</li>
                  <li>Возврат</li>
                </Links>
              </section>
              <section>
                <FooterHead><Fit w={420}>ПОДПИСАТЬСЯ НА НАШУ РАССЫЛКУ</Fit></FooterHead>
                <MailRow><span>E-mail</span><Arrow /></MailRow>
                <Consent>
                  <Box />
                  <span>
                    Да, я хочу получать новости и рекламу<br />
                    сайта ditanails.ru по email, и я прочитал,<br />
                    понял и принимаю раздел <Inline href="#">политика</Inline><br />
                    <Inline href="#">конфиденциальности</Inline> этого сайта.
                  </span>
                </Consent>
              </section>
            </FooterCols>
          </FooterTop>
          <Bar>
            <BarRow>
              <BarLink $top={7} href="#">Политика конфиденциальности</BarLink>
              <Social><Instagram /><Vk /></Social>
              <Credit><span>Сайт разработан:</span><BarLink $top={9} href="#">Slepuhina Natalia</BarLink></Credit>
            </BarRow>
          </Bar>
        </Footer>
      </Page>
    </>
  );
}
